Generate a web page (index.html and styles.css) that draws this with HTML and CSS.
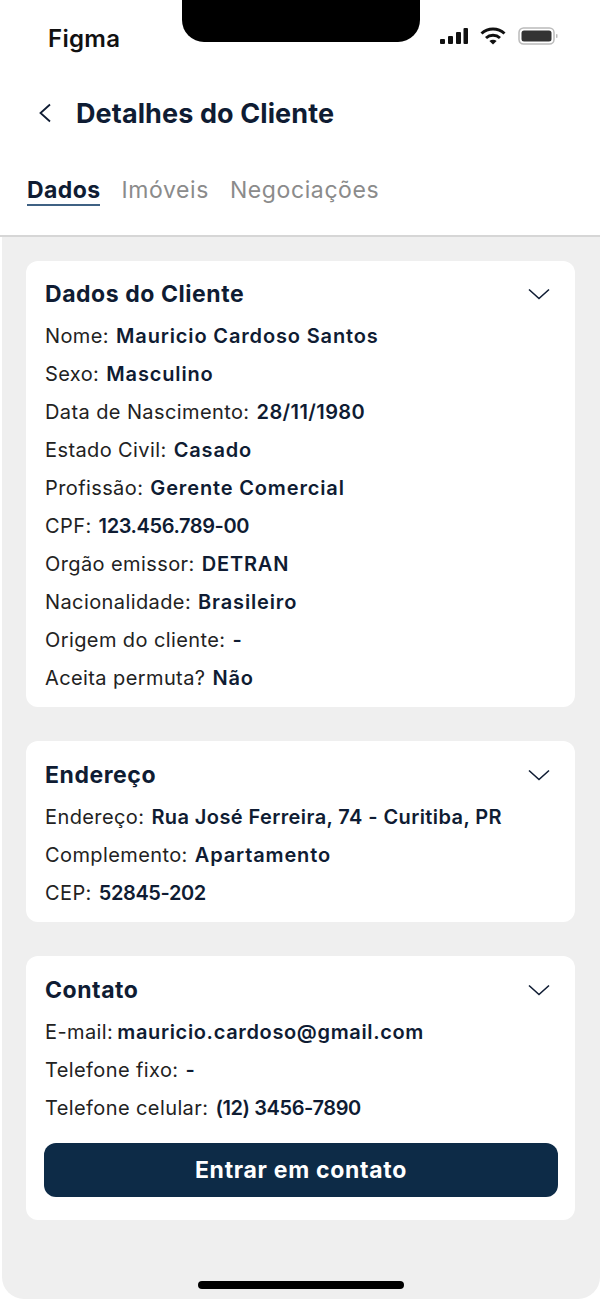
FILE: index.html
```html
<!DOCTYPE html>
<html lang="pt-BR">
<head>
  <meta charset="UTF-8" />
  <meta name="viewport" content="width=device-width, initial-scale=1.0"/>
  <title>Detalhes do Cliente</title>
  <link rel="stylesheet" href="styles.css">
</head>
<body>
  <div class="notch"></div>

  <div class="status-bar">
    <span class="carrier">Figma</span>
    <div class="status-icons">
      <svg width="28" height="16" viewBox="0 0 28 16" fill="#111">
        <rect x="0" y="11" width="5" height="5" rx="1"/>
        <rect x="8" y="8" width="5" height="8" rx="1"/>
        <rect x="16" y="4" width="5" height="12" rx="1"/>
        <rect x="23.500" y="0" width="4.500" height="16" rx="1"/>
      </svg>
      <svg width="26" height="18" viewBox="0 0 26 18" fill="none" stroke="#111" stroke-width="3">
        <path d="M1.500 6.500C8 .5 18 .5 24.500 6.500"/>
        <path d="M6 11c4-3.600 10-3.600 14 0"/>
        <path d="M13 17.500l-3.600-3.600c2-1.600 5.200-1.600 7.200 0z" fill="#111" stroke="none"/>
      </svg>
      <svg width="40" height="18" viewBox="0 0 40 18">
        <rect x="1" y="1" width="35" height="16" rx="4.500" fill="none" stroke="#bbb" stroke-width="1.500"/>
        <rect x="3.500" y="3.500" width="30" height="11" rx="2.500" fill="#333"/>
        <rect x="38" y="7" width="1.500" height="4" rx="0.700" fill="#bbb"/>
      </svg>
    </div>
  </div>

  <header class="top-bar">
    <svg class="back" width="14" height="20" viewBox="0 0 14 20" fill="none" stroke="#0f1c33" stroke-width="1.800">
      <path d="M12 1.500L2.500 10l9.500 8.500"/>
    </svg>
    <h1>Detalhes do Cliente</h1>
  </header>

  <nav class="tabs">
    <a class="tab active">Dados</a>
    <a class="tab">Imóveis</a>
    <a class="tab">Negociações</a>
  </nav>

  <main class="content">
    <section class="card">
      <div class="card-head">
        <h2>Dados do Cliente</h2>
        <svg class="chevron" width="24" height="14" viewBox="0 0 24 14" fill="none" stroke="#0f1c33" stroke-width="1.600"><path d="M2 2.500l10 9 10-9"/></svg>
      </div>
      <p class="row">Nome: <b>Mauricio Cardoso Santos</b></p>
      <p class="row">Sexo: <b>Masculino</b></p>
      <p class="row">Data de Nascimento: <b class="tight">28/11/1980</b></p>
      <p class="row">Estado Civil: <b>Casado</b></p>
      <p class="row">Profissão: <b>Gerente Comercial</b></p>
      <p class="row">CPF: <b class="num">123.456.789-00</b></p>
      <p class="row">Orgão emissor: <b>DETRAN</b></p>
      <p class="row">Nacionalidade: <b>Brasileiro</b></p>
      <p class="row">Origem do cliente: <b>-</b></p>
      <p class="row">Aceita permuta? <b>Não</b></p>
    </section>

    <section class="card">
      <div class="card-head">
        <h2>Endereço</h2>
        <svg class="chevron" width="24" height="14" viewBox="0 0 24 14" fill="none" stroke="#0f1c33" stroke-width="1.600"><path d="M2 2.500l10 9 10-9"/></svg>
      </div>
      <p class="row">Endereço: <b class="tight">Rua José Ferreira, 74 - Curitiba, PR</b></p>
      <p class="row">Complemento: <b>Apartamento</b></p>
      <p class="row">CEP: <b class="num">52845-202</b></p>
    </section>

    <section class="card">
      <div class="card-head">
        <h2>Contato</h2>
        <svg class="chevron" width="24" height="14" viewBox="0 0 24 14" fill="none" stroke="#0f1c33" stroke-width="1.600"><path d="M2 2.500l10 9 10-9"/></svg>
      </div>
      <p class="row">E-mail: <b class="mail">mauricio.cardoso@gmail.com</b></p>
      <p class="row">Telefone fixo: <b>-</b></p>
      <p class="row">Telefone celular: <b class="num">(12) 3456-7890</b></p>
      <button class="cta">Entrar em contato</button>
    </section>

    <div class="home-bar"></div>
  </main>
</body>
</html>
```

FILE: styles.css
```css
html, body {
  margin: 0;
  background: white;
}

body {
  position: relative;
  height: 1299px;
  overflow: hidden;
  font-family: Inter, "Liberation Sans", sans-serif;
  color: #222;
  display: flex;
  flex-direction: column;
}

.notch {
  position: absolute;
  top: 0;
  left: 182px;
  width: 238px;
  height: 42px;
  background: black;
  border-radius: 0 0 22px 22px;
}

.status-bar {
  height: 76px;
  flex: none;
  box-sizing: border-box;
  padding: 25px 42px 0 48px;
  display: flex;
  justify-content: space-between;
  align-items: flex-start;
}

.carrier {
  font-size: 24px;
  line-height: 28px;
  font-weight: 600;
  color: #111;
  letter-spacing: 0.3px;
}

.status-icons {
  display: flex;
  align-items: center;
  gap: 12px;
  margin-top: 2px;
}

.top-bar {
  height: 74px;
  flex: none;
  box-sizing: border-box;
  padding-left: 38px;
  display: flex;
  align-items: center;
  gap: 24px;
}

h1 {
  margin: 0;
  font-size: 27px;
  font-weight: 700;
  color: #0f1c33;
  letter-spacing: 0.1px;
}

.tabs {
  height: 87px;
  flex: none;
  box-sizing: border-box;
  padding: 26px 0 0 27px;
  display: flex;
  gap: 21px;
  align-items: flex-start;
  border-bottom: 2px solid #d6d6d6;
}

.tab {
  font-size: 23px;
  line-height: 28px;
  color: #8b8b8b;
  letter-spacing: 0.6px;
}

.tab.active {
  font-weight: 700;
  color: #0f1c33;
  border-bottom: 2px solid #3f6183;
  letter-spacing: 0.4px;
}

.content {
  flex: 1;
  position: relative;
  margin-left: 2px;
  background: #efefef;
  border-radius: 0 0 22px 22px;
  padding: 24px 25px 0 24px;
  display: flex;
  flex-direction: column;
  gap: 34px;
}

.card {
  background: white;
  border-radius: 12px;
  padding: 17px 17px 9px 19px;
}

.card + .card {
  padding-top: 18px;
}

.card-head {
  display: flex;
  justify-content: space-between;
  align-items: center;
  height: 32px;
  margin-bottom: 8px;
  padding-right: 7px;
}

h2 {
  margin: 0;
  font-size: 23px;
  font-weight: 700;
  color: #0f1c33;
  letter-spacing: 0.55px;
}

.row {
  margin: 0;
  height: 38px;
  line-height: 37px;
  font-size: 20px;
  color: #222;
  white-space: nowrap;
  letter-spacing: 0.4px;
}

.row b {
  font-weight: 600;
  color: #0f1c33;
  margin-left: 1px;
  letter-spacing: 0.85px;
}

.row b.tight {
  letter-spacing: 0.4px;
}

.row b.num {
  letter-spacing: -0.4px;
}

.row b.mail {
  margin-left: -2px;
  letter-spacing: 0.65px;
}

.cta {
  display: block;
  width: calc(100% + 1px);
  height: 54px;
  margin: 15px 0 14px -1px;
  background: #0d2b47;
  color: white;
  border: none;
  border-radius: 12px;
  font-family: inherit;
  font-size: 23px;
  font-weight: 700;
  letter-spacing: 0.7px;
}

.home-bar {
  position: absolute;
  left: 196px;
  bottom: 10px;
  width: 206px;
  height: 8px;
  border-radius: 4px;
  background: black;
}
```
